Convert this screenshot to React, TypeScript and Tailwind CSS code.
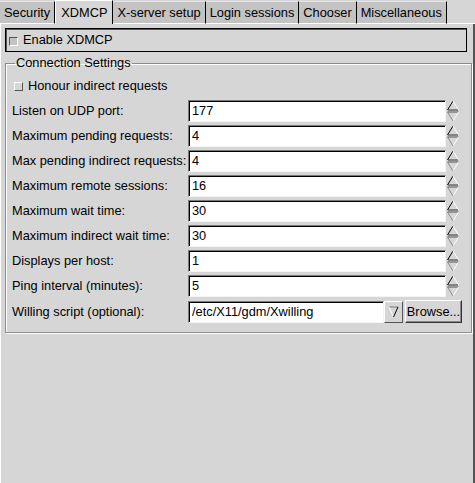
import React from "react";

const tabs = ["Security", "XDMCP", "X-server setup", "Login sessions", "Chooser", "Miscellaneous"];

const rows = [
  { label: "Listen on UDP port:", value: "177" },
  { label: "Maximum pending requests:", value: "4" },
  { label: "Max pending indirect requests:", value: "4" },
  { label: "Maximum remote sessions:", value: "16" },
  { label: "Maximum wait time:", value: "30" },
  { label: "Maximum indirect wait time:", value: "30" },
  { label: "Displays per host:", value: "1" },
  { label: "Ping interval (minutes):", value: "5" },
];

const Spinner: React.FC = () => (
  <svg width="14" height="22" viewBox="0 0 14 22" className="shrink-0">
    <polygon points="7,1 1.5,10 12.5,10" fill="#d6d6d6" />
    <polyline points="1.5,10 7,1" fill="none" stroke="#000" strokeWidth="1" />
    <polyline points="7,1 12.5,10" fill="none" stroke="#fff" strokeWidth="1" />
    <line x1="2" y1="10" x2="12" y2="10" stroke="#333" strokeWidth="1" />
    <polygon points="1.5,12 12.5,12 7,21" fill="#d6d6d6" />
    <polyline points="1.5,12 12.5,12" fill="none" stroke="#555" strokeWidth="1" />
    <polyline points="7,21 12.5,12" fill="none" stroke="#fff" strokeWidth="1" />
    <line x1="1.5" y1="12" x2="7" y2="21" stroke="#8a8a8a" strokeWidth="1" />
  </svg>
);

const Field: React.FC<{ value: string; width: string }> = ({ value, width }) => (
  <div
    className={`${width} h-[22px] bg-white border border-t-[#7a7a7a] border-l-[#7a7a7a] border-r-[#f4f4f4] border-b-[#f4f4f4] shadow-[inset_1px_1px_0_#000] flex items-center pl-[3px] shrink-0`}
  >
    {value}
  </div>
);

export default function App() {
  return (
    <div className="w-[475px] h-[483px] bg-[#d6d6d6] text-[12.8px] text-black font-['Liberation_Sans',Arial,sans-serif] flex flex-col overflow-hidden">
      {/* tab strip */}
      <div className="h-[24px] flex items-end shrink-0">
        {tabs.map((t) =>
          t === "XDMCP" ? (
            <div
              key={t}
              className="h-[24px] px-[5px] bg-[#d6d6d6] border-l border-t border-l-white border-t-white border-r border-r-black flex items-center"
            >
              {t}
            </div>
          ) : (
            <div
              key={t}
              className="h-[23px] px-[4px] bg-[#c3c3c3] border-b border-b-white border-t border-t-[#e4e4e4] border-r border-r-black flex items-center pt-[1px]"
            >
              {t}
            </div>
          )
        )}
        <div className="flex-1 h-[1px] bg-white" />
      </div>

      {/* notebook page */}
      <div className="flex-1 border-l border-l-white border-r-2 border-r-[#555] px-[4px] pt-[4px]">
        <div className="h-[24px] border border-black shadow-[inset_1px_1px_0_#555] flex items-center pl-[3px] mr-[2px]">
          <div className="w-[9px] h-[9px] bg-[#c3c3c3] border border-t-[#555] border-l-[#555] border-r-white border-b-white mt-[2px]" />
          <span className="ml-[5px]">Enable XDMCP</span>
        </div>

        <fieldset className="mt-[4px] mr-[2px] border border-[#8c8c8c] shadow-[inset_1px_1px_0_#fff,1px_1px_0_#fff] pl-[6px] pr-[9px] pb-[9px]">
          <legend className="ml-[3px] px-[1px] leading-[14px]">Connection Settings</legend>

          <div className="h-[22px] flex items-center pl-[2px] mt-[5px]">
            <div className="w-[9px] h-[9px] bg-[#d6d6d6] border border-t-white border-l-white border-r-[#555] border-b-[#555] mt-[1px]" />
            <span className="ml-[5px]">Honour indirect requests</span>
          </div>

          <div className="flex flex-col gap-[3px] mt-[3px]">
            {rows.map((r) => (
              <div key={r.label} className="flex items-center h-[22px]">
                <div className="w-[176px] shrink-0 whitespace-nowrap">{r.label}</div>
                <Field value={r.value} width="w-[258px]" />
                <Spinner />
              </div>
            ))}

            <div className="flex items-center h-[23px]">
              <div className="w-[176px] shrink-0 whitespace-nowrap">Willing script (optional):</div>
              <Field value="/etc/X11/gdm/Xwilling" width="w-[196px]" />
              <button className="w-[19px] h-[22px] bg-[#d6d6d6] border border-t-white border-l-white border-r-[#555] border-b-[#555] flex items-center justify-center">
                <svg width="11" height="12" viewBox="0 0 11 12">
                  <polyline points="1,1 10,1" fill="none" stroke="#7a7a7a" strokeWidth="1" />
                  <polyline points="1,1 5.5,11" fill="none" stroke="#fff" strokeWidth="1" />
                  <polyline points="5.5,11 10,1" fill="none" stroke="#000" strokeWidth="1" />
                </svg>
              </button>
              <button className="ml-[2px] w-[57px] h-[23px] bg-[#d6d6d6] border border-t-white border-l-white border-r-[#333] border-b-[#333] shadow-[inset_-1px_-1px_0_#8a8a8a] flex items-center justify-center">
                Browse...
              </button>
            </div>
          </div>
        </fieldset>
      </div>
    </div>
  );
}
